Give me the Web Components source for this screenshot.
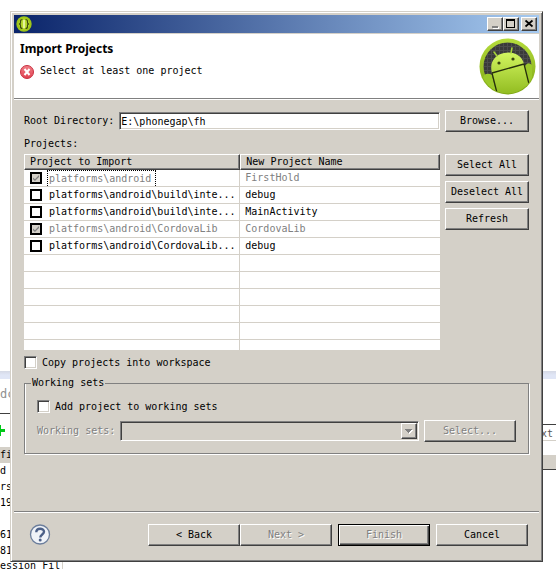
<!DOCTYPE html>
<html lang="en">
<head>
<meta charset="utf-8">
<title>Import Projects</title>
<style>
  html { min-height: 100%; background: #fff; }
  body {
    margin: 0; position: relative; min-height: 100vh; overflow: hidden;
    font: 10px/12px "DejaVu Sans Mono", "Liberation Mono", monospace; color: #000;
    --face: #d4d0c8; --light: #fff; --shade: #808080; --dark: #404040;
    display: flow-root;
  }
</style>
</head>
<body>
<ide-backdrop></ide-backdrop>
<dialog-window>
  <wizard-header slot="header" heading="Import Projects">Select at least one project</wizard-header>
  <import-form></import-form>
  <wizard-footer slot="footer"></wizard-footer>
</dialog-window>

<script>
function define(name, html, setup) {
  const template = document.createElement('template');
  template.innerHTML = html;
  customElements.define(name, class extends HTMLElement {
    constructor() {
      super();
      this.attachShadow({ mode: 'open' }).append(template.content.cloneNode(true));
    }
    connectedCallback() {
      if (setup) setup(this, this.shadowRoot);
    }
  });
}

/* Push button with the classic raised edge; "primary" adds the black default frame. */
define('win-button', `
<style>
  :host { display: block; min-width: 0; }
  button {
    display: block; box-sizing: border-box; width: 100%; height: 22px; margin: 0; padding: 0 2px;
    border: 1px solid; border-color: var(--light) var(--dark) var(--dark) var(--light);
    box-shadow: inset -1px -1px var(--shade);
    background: var(--face); color: #000; font: inherit; text-align: center; white-space: nowrap;
  }
  button:disabled { color: #808080; text-shadow: 1px 1px #fff; }
  :host([primary]) button {
    border-color: #000;
    box-shadow: inset 1px 1px var(--light), inset -1px -1px var(--dark), inset -2px -2px var(--shade);
  }
</style>
<button type="button"><slot></slot></button>`, (host, root) => {
  root.querySelector('button').disabled = host.hasAttribute('disabled');
});

define('check-box', `
<style>
  :host { display: block; }
  label { display: flex; align-items: center; gap: 5px; }
  input {
    appearance: none; flex: none; box-sizing: border-box; width: 13px; height: 13px; margin: 0; background: #fff;
    border: 1px solid; border-color: var(--shade) #fff #fff var(--shade);
    box-shadow: inset 1px 1px var(--dark), inset -1px -1px var(--face);
  }
</style>
<label><input type="checkbox"><span><slot></slot></span></label>`);

define('text-field', `
<style>
  :host { display: flex; align-items: center; gap: 5px; }
  label { flex: none; }
  input {
    flex: 1; min-width: 0; box-sizing: border-box; height: 18px; padding: 0 1px; background: #fff; font: inherit; color: #000;
    border: 1px solid; border-color: var(--shade) #fff #fff var(--shade); outline: 0;
    box-shadow: inset 1px 1px var(--dark), inset -1px -1px var(--face);
  }
</style>
<label for="field"><slot></slot></label><input id="field" type="text">`, (host, root) => {
  root.querySelector('input').value = host.getAttribute('value') || '';
});

define('combo-box', `
<style>
  :host { display: flex; align-items: center; gap: 5px; }
  label { flex: none; color: #808080; text-shadow: 1px 1px #fff; }
  .box { flex: 1; min-width: 0; display: grid; }
  .box > * { grid-area: 1 / 1; }
  select {
    appearance: none; box-sizing: border-box; width: 100%; height: 20px; margin: 0; background: var(--face);
    border: 1px solid; border-color: var(--shade) #fff #fff var(--shade); border-radius: 0; opacity: 1;
    box-shadow: inset 1px 1px var(--dark), inset -1px -1px var(--face); font: inherit;
  }
  .arrow {
    place-self: center end; display: grid; place-items: center; box-sizing: border-box; width: 16px; height: 16px; margin-right: 2px;
    border: 1px solid; border-color: #fff var(--dark) var(--dark) #fff;
    box-shadow: inset -1px -1px var(--shade); pointer-events: none;
  }
</style>
<label for="sets"><slot></slot></label>
<div class="box">
  <select id="sets" disabled></select>
  <span class="arrow"><svg width="10" height="6" viewBox="0 0 10 6" shape-rendering="crispEdges"><path d="M2 2h7l-3.500 4z" fill="#fff"/><path d="M1 1h7l-3.500 4z" fill="#808080"/></svg></span>
</div>`);

define('project-table', `
<style>
  :host { display: block; }
  table { width: 100%; table-layout: fixed; border-collapse: separate; border-spacing: 0; background: #fff; }
  col:first-child { width: 52%; }
  th {
    box-sizing: border-box; height: 16px; padding: 1px 5px 2px; text-align: left; font-weight: 400; line-height: 11px;
    background: var(--face); border: 1px solid; border-color: #fff var(--dark) var(--dark) #fff;
    box-shadow: inset -1px -1px var(--shade);
  }
  td { box-sizing: border-box; height: 17px; padding: 0 5px; border-bottom: 1px solid var(--face); white-space: nowrap; overflow: hidden; }
  td:first-child { border-right: 1px solid var(--face); padding: 0 0 0 6px; }
  tr.short td { height: 10px; border-bottom: 0; }
  tr.locked { color: #808080; }
  label { display: flex; align-items: center; gap: 5px; height: 16px; }
  label span { padding: 0 2px; line-height: 16px; }
  tr.current span { box-sizing: border-box; height: 16px; width: 109px; padding: 0 1px; line-height: 15px; border: 1px dotted #000; border-bottom: 0; }
  input { appearance: none; flex: none; display: grid; place-items: center; box-sizing: border-box; width: 12px; height: 12px; margin: 0; border: 2px solid #000; background: #fff; }
  tr.locked input { background: var(--face); }
  input:checked::after { content: ""; width: 6px; height: 6px; background: #808080; clip-path: polygon(0 40%, 33% 70%, 100% 0, 100% 32%, 33% 100%, 0 72%); }
</style>
<table>
  <colgroup><col><col></colgroup>
  <thead><tr><th scope="col">Project to Import</th><th scope="col">New Project Name</th></tr></thead>
  <tbody></tbody>
</table>`, (host, root) => {
  const projects = [
    ['platforms\\android', 'FirstHold', 'locked current'],
    ['platforms\\android\\build\\inte...', 'debug', ''],
    ['platforms\\android\\build\\inte...', 'MainActivity', ''],
    ['platforms\\android\\CordovaLib', 'CordovaLib', 'locked'],
    ['platforms\\android\\CordovaLib...', 'debug', '']
  ];
  const body = root.querySelector('tbody');
  body.replaceChildren();
  for (const [path, name, state] of projects) {
    const row = body.insertRow();
    row.className = state;
    const label = document.createElement('label');
    const box = document.createElement('input');
    box.type = 'checkbox';
    box.checked = box.disabled = state.includes('locked');
    const text = document.createElement('span');
    text.textContent = path;
    label.append(box, text);
    row.insertCell().append(label);
    row.insertCell().textContent = name;
  }
  for (let i = 0; i < 6; i++) {
    const row = body.insertRow();
    row.insertCell();
    row.insertCell();
    if (i === 5) row.className = 'short';
  }
});

define('working-sets', `
<style>
  :host { display: block; }
  fieldset {
    min-width: 0; margin: 0; padding: 11px 12px 11px; border: 1px solid var(--shade);
    box-shadow: 1px 1px #fff, inset 1px 0 #fff;
  }
  legend { margin-left: -6px; padding: 0 1px; background: var(--face); }
  .row { display: grid; grid-template-columns: minmax(0, 1fr) 92px; gap: 5px; align-items: center; margin-top: 7px; }
</style>
<fieldset>
  <legend>Working sets</legend>
  <check-box>Add project to working sets</check-box>
  <div class="row">
    <combo-box>Working sets:</combo-box>
    <win-button disabled>Select...</win-button>
  </div>
</fieldset>`);

define('import-form', `
<style>
  :host { display: block; padding: 11px 10px 57px; }
  .row { display: grid; grid-template-columns: minmax(0, 1fr) 84px; gap: 5px; align-items: start; }
  text-field { align-self: center; }
  p { margin: 6px 0 4px; }
  .buttons { display: grid; gap: 5px; }
  .copy { margin: 6px 0 8px; }
</style>
<div class="row">
  <text-field value="E:\\phonegap\\fh">Root Directory:</text-field>
  <win-button>Browse...</win-button>
</div>
<p>Projects:</p>
<div class="row">
  <project-table></project-table>
  <div class="buttons">
    <win-button>Select All</win-button>
    <win-button>Deselect All</win-button>
    <win-button>Refresh</win-button>
  </div>
</div>
<check-box class="copy">Copy projects into workspace</check-box>
<working-sets></working-sets>`);

define('wizard-header', `
<style>
  :host {
    display: flex; justify-content: space-between; box-sizing: border-box; height: 65px; padding: 4px 3px 0 6px;
    background: #fff; border-bottom: 1px solid var(--shade); box-shadow: 0 1px #fff;
  }
  h1 { margin: 2px 0 7px; font: 700 12px/18px "Noto Sans", "Open Sans", sans-serif; }
  p { display: flex; gap: 6px; margin: 0; }
  p span { line-height: 12px; }
  svg { display: block; flex: none; }
</style>
<div>
  <h1></h1>
  <p>
    <svg width="14" height="14" viewBox="0 0 14 14"><defs><linearGradient id="r" x2="0" y2="1"><stop stop-color="#f08088"/><stop offset="1" stop-color="#e04050"/></linearGradient></defs><circle cx="7" cy="7" r="6.500" fill="url(#r)" stroke="#c83040"/><path d="M4.500 4l5 6M9.500 4l-5 6" stroke="#fff" stroke-width="2"/></svg>
    <span><slot></slot></span>
  </p>
</div>
<svg width="57" height="57" viewBox="0 0 57 57">
  <defs>
    <linearGradient id="ring" x2="0" y2="1"><stop stop-color="#b5dc3c"/><stop offset="1" stop-color="#7da512"/></linearGradient>
    <linearGradient id="bot" x2="0" y2="1"><stop stop-color="#d2f560"/><stop offset="1" stop-color="#8db81c"/></linearGradient>
    <pattern id="mesh" width="4" height="4" patternUnits="userSpaceOnUse"><path fill="#3a3a3a" d="M0 0h4v4H0z"/><path d="M0 .5h4M.5 0v4" stroke="#4c4c4c"/></pattern>
    <clipPath id="disc"><circle cx="28.500" cy="28.500" r="27"/></clipPath>
  </defs>
  <circle cx="28.500" cy="28.500" r="28" fill="url(#ring)"/>
  <circle cx="28.500" cy="28.500" r="24" fill="url(#mesh)"/>
  <g clip-path="url(#disc)">
    <path d="M4 40q1-5 7-4l2 1 5 20H4zM46 28q3-5 7-1v32H46z" fill="#9cc92a"/>
    <path d="M13 35C10 24 16 17 25 15s18 2 20 11l8 33H18z" fill="url(#bot)"/>
    <path d="M13 35l32-9M13 35l5 20M45 26l5 20" fill="none" stroke="#26300c" stroke-width="1.300"/>
  </g>
  <path d="M18 18l-3-4M32 15l1-5" stroke="#a8d538" stroke-width="1.500" stroke-linecap="round"/>
  <circle cx="20" cy="25" r="1.600" fill="#3a4510"/><circle cx="34" cy="21" r="1.600" fill="#3a4510"/>
</svg>`, (host, root) => {
  root.querySelector('h1').textContent = host.getAttribute('heading');
});

define('wizard-footer', `
<style>
  :host {
    display: flex; align-items: center; justify-content: space-between; padding: 12px 11px;
    padding-left: 15px; border-top: 1px solid var(--shade); box-shadow: inset 0 1px #fff;
  }
  .help { width: 22px; height: 22px; padding: 0; border: 0; background: none; }
  .help svg { display: block; }
  .actions { display: flex; gap: 6px; }
  .pair { display: flex; }
  win-button { width: 92px; }
</style>
<button class="help" type="button" aria-label="Help">
  <svg width="22" height="22" viewBox="0 0 22 22"><circle cx="11" cy="10.500" r="9.500" fill="#f0f3f8" stroke="#6c7e9c" stroke-width="1.300"/><path d="M7.300 8.200C7.300 3.600 15 3.800 15 7.800c0 2.700-3.700 2.700-3.700 5.700" fill="none" stroke="#4c6088" stroke-width="2.400"/><circle cx="11.200" cy="16" r="1.500" fill="#4c6088"/></svg>
</button>
<div class="actions">
  <div class="pair"><win-button>&lt; Back</win-button><win-button disabled>Next &gt;</win-button></div>
  <win-button disabled primary>Finish</win-button>
  <win-button>Cancel</win-button>
</div>`);

define('title-bar', `
<style>
  :host {
    display: flex; align-items: center; height: 18px; padding: 0 2px; margin-bottom: 1px;
    background: linear-gradient(90deg, #0a246a, #a6caf0);
  }
  .logo { margin-right: auto; }
  svg { display: block; }
  button {
    display: grid; place-items: center; box-sizing: border-box; width: 16px; height: 14px; padding: 0; background: var(--face);
    border: 1px solid; border-color: #fff var(--dark) var(--dark) #fff; box-shadow: inset -1px -1px var(--shade);
  }
  button:last-child { margin-left: 2px; }
</style>
<svg class="logo" width="16" height="16" viewBox="0 0 16 16"><circle cx="8" cy="8" r="7.700" fill="#9fc618"/><circle cx="8" cy="8" r="5.500" fill="#b8dc2e"/><path d="M6.500 3.500q-2 0-2 2v1.500l-1 1 1 1v1.500q0 2 2 2M9.500 3.500q2 0 2 2v1.500l1 1-1 1v1.500q0 2-2 2" fill="none" stroke="#3c4a10" stroke-width="1.200"/><path d="M8 4v8" stroke="#e4f49a" stroke-width="2"/></svg>
<button type="button" aria-label="Minimize"><svg width="12" height="10" shape-rendering="crispEdges"><path fill="#fff" d="M4 8h6v2H4z"/><path fill="#808080" d="M3 7h6v2H3z"/></svg></button>
<button type="button" aria-label="Maximize"><svg width="12" height="10" shape-rendering="crispEdges"><path fill="none" stroke="#000" d="M1.500 1v7.500h8V1"/><path d="M1 0h9v2H1z"/></svg></button>
<button type="button" aria-label="Close"><svg width="12" height="10"><path d="M2.500 1.500l7 6M9.500 1.500l-7 6" stroke="#000" stroke-width="1.700"/></svg></button>`);

define('dialog-window', `
<style>
  :host {
    display: block; position: relative; margin: 11px 13px 8px 10px; padding: 2px; background: var(--face);
    border: 1px solid; border-color: var(--face) var(--dark) var(--dark) var(--face);
    box-shadow: inset 1px 1px #fff, inset -1px -1px var(--shade);
  }
  .inner { padding: 1px; }
</style>
<div class="inner">
  <title-bar></title-bar>
  <slot name="header"></slot>
  <slot></slot>
  <slot name="footer"></slot>
</div>`);

/* The editor behind the dialog: only its outer edges stay visible. */
define('ide-backdrop', `
<style>
  :host { position: absolute; inset: 0; overflow: hidden; }
  .band { position: absolute; top: 371px; left: 0; right: 0; height: 8px; background: linear-gradient(#d5d9e5, #e0e6f6 50%); }
  .left, .right, .console { position: absolute; white-space: nowrap; }
  .left { left: 0; top: 379px; bottom: 0; width: 63px; }
  .left div { height: 16px; line-height: 16px; }
  .left .tab { height: 34px; line-height: 30px; font-size: 12px; color: #909090; border-bottom: 1px solid var(--dark); }
  .left .tool { height: 33px; }
  .left .tool svg { display: block; padding-top: 10px; }
  .left .head { background: var(--face); width: 10px; }
  .left .last { height: 10px; border-right: 1px solid var(--face); line-height: 14px; }
  .right { right: 0; top: 424px; width: 20px; height: 46px; box-sizing: border-box; border-top: 1px solid var(--dark); border-bottom: 1px solid var(--dark); text-align: right; color: #555; }
  .right .label { padding: 3px 3px 0 0; border-bottom: 1px solid var(--face); }
  .right .bar { margin-top: 14px; height: 14px; background: var(--face); }
  .console { left: 78px; top: 561px; width: 260px; height: 1px; }
</style>
<div class="band"></div>
<div class="left">
  <div class="tab">dc</div>
  <div class="tool"><svg width="6" height="13"><path d="M0 5h5v3H0z" fill="#00c818"/><path d="M0 1h1v11H0z" fill="#00c818"/></svg></div>
  <div class="head">fi</div><div>d</div><div>rs</div><div>19</div><div></div><div>61</div><div>81</div><div class="last">ession Fil</div>
</div>
<div class="right"><div class="label">xt</div><div class="bar"></div></div>
<svg class="console" viewBox="0 0 260 1" preserveAspectRatio="none"><path d="M0 .5h6M32 .5h12M52 .5h12M73 .5h81M182 .5h18M240 .5h18" stroke="#f01010" stroke-dasharray="5 2"/></svg>`);
</script>
</body>
</html>
